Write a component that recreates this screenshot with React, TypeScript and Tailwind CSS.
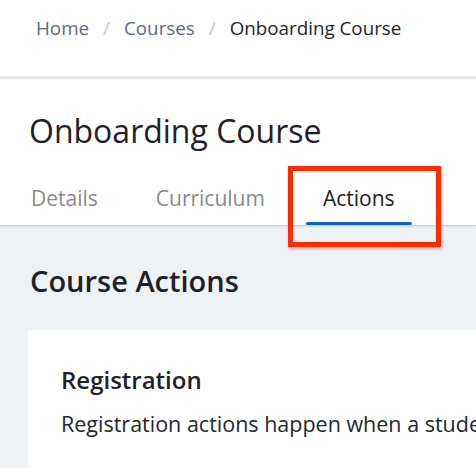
const tabs = ["Details", "Curriculum", "Actions"];

export default function App() {
  const active = "Actions";

  return (
    <div className="relative h-[468px] w-[476px] overflow-hidden bg-[#eff2f5] font-['Open_Sans',sans-serif]">
      {/* breadcrumb bar */}
      <nav className="h-[79px] border-b-[3px] border-[#e4e6e9] bg-white pl-[36px] pt-[14px]">
        <ol className="flex items-center text-[18.8px] leading-[28px]">
          <li className="text-[#5b6c82]">Home</li>
          <li className="px-[14px] text-[#c3c9d0]">/</li>
          <li className="text-[#5b6c82]">Courses</li>
          <li className="px-[14px] text-[#c3c9d0]">/</li>
          <li className="text-[#1f252b]">Onboarding Course</li>
        </ol>
      </nav>

      {/* page header + tabs */}
      <header className="border-b border-[#cdd1d6] bg-white pt-[32px] shadow-[0_1px_2px_rgba(0,0,0,0.08)]">
        <h1 className="pl-[29px] text-[32px] leading-[40px] text-[#1d2228]">
          Onboarding Course
        </h1>
        <div className="mt-[19px] flex gap-[24px] pl-[14px]">
          {tabs.map((tab) => {
            const isActive = tab === active;
            return (
              <div key={tab} className="flex flex-col px-[17px] pt-[14px]">
                <span
                  className={`text-[21px] leading-[28px] ${
                    isActive ? "text-[#1c1c1c]" : "text-[#8a8a8a]"
                  }`}
                >
                  {tab}
                </span>
                <span
                  className={`-mx-[17px] mt-[10px] h-[3px] rounded-full ${
                    isActive ? "bg-[#0a66c9]" : "bg-transparent"
                  }`}
                />
              </div>
            );
          })}
        </div>
      </header>

      {/* content */}
      <main className="pt-[36px]">
        <h2 className="pl-[30px] text-[29px] font-semibold leading-[38px] text-[#1d2228]">
          Course Actions
        </h2>
        <section className="ml-[28px] mt-[30px] bg-white pl-[33px] pt-[35px] pb-[40px]">
          <h3 className="text-[24px] font-semibold leading-[30px] text-[#1d2228]">
            Registration
          </h3>
          <p className="mt-[15px] whitespace-nowrap text-[21.5px] leading-[28px] text-[#23282d]">
            Registration actions happen when a student registers for this course.
          </p>
        </section>
      </main>

      {/* annotation highlight */}
      <div className="absolute left-[288px] top-[166px] h-[81px] w-[153px] border-[5px] border-[#ff2a00] shadow-[1px_2px_3px_rgba(0,0,0,0.25)]" />
    </div>
  );
}
